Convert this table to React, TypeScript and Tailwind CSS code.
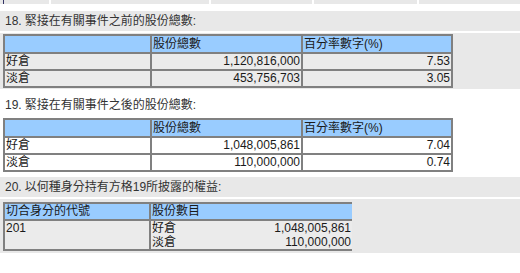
const font = { fontFamily: '"Liberation Sans", Arial, "Noto Sans CJK TC", sans-serif' };

function Title({ num, text, shade }: { num: string; text: string; shade: boolean }) {
  return (
    <div className={`h-[20px] flex items-center pl-[5px] text-[12px] text-[#333] ${shade ? "bg-[#e8e8e8]" : "bg-white"}`}>
      <span>{num}.</span>
      <span className="ml-[3px]">{text}</span>
    </div>
  );
}

function PositionTable({ rows, shade }: { rows: [string, string, string][]; shade: boolean }) {
  const cell = shade ? "bg-[#ebebeb]" : "bg-white";
  return (
    <div className="ml-[3px] w-[450px] p-[2px] bg-[#808080] grid grid-cols-[145px_149px_148px] gap-[2px] text-[12px] leading-[15px] text-[#1a1a1a]">
      <div className="bg-[#99ccff] h-[16px]" />
      <div className="bg-[#99ccff] h-[16px] pl-[1px] leading-[16px]">股份總數</div>
      <div className="bg-[#99ccff] h-[16px] pl-[1px] leading-[16px]">百分率數字(%)</div>
      {rows.map((r) => (
        <div key={r[0]} className="contents">
          <div className={`${cell} h-[15px] pl-[1px]`}>{r[0]}</div>
          <div className={`${cell} h-[15px] pr-[1px] text-right`}>{r[1]}</div>
          <div className={`${cell} h-[15px] pr-[1px] text-right`}>{r[2]}</div>
        </div>
      ))}
    </div>
  );
}

export default function App() {
  return (
    <div className="w-[520px] h-[273px] bg-white overflow-hidden flex flex-col" style={font}>
      <div className="h-[4px] flex gap-[2px] bg-white">
        <div className="w-[49px] bg-[#e8e8e8]">
          <div className="ml-[3px] w-[1px] h-full bg-[#333366]" />
        </div>
        <div className="w-[158px] bg-[#e8e8e8]" />
        <div className="w-[101px] bg-[#e8e8e8]" />
        <div className="w-[103px] bg-[#e8e8e8]" />
        <div className="flex-1 bg-[#e8e8e8]" />
      </div>

      <div className="mt-[7px]">
        <Title num="18" text="緊接在有關事件之前的股份總數:" shade />
        <div className="mt-[2px] bg-[#e8e8e8] pt-[1px] pb-[1px]">
          <PositionTable
            shade
            rows={[
              ["好倉", "1,120,816,000", "7.53"],
              ["淡倉", "453,756,703", "3.05"],
            ]}
          />
        </div>
      </div>

      <div className="mt-[6px]">
        <Title num="19" text="緊接在有關事件之後的股份總數:" shade={false} />
        <div className="mt-[2px] bg-white pt-[1px] pb-[1px]">
          <PositionTable
            shade={false}
            rows={[
              ["好倉", "1,048,005,861", "7.04"],
              ["淡倉", "110,000,000", "0.74"],
            ]}
          />
        </div>
      </div>

      <div className="mt-[4px]">
        <Title num="20" text="以何種身分持有方格19所披露的權益:" shade />
        <div className="mt-[2px] bg-[#e8e8e8] pt-[3px] pb-[2px]">
          <div className="ml-[3px] w-[349px] p-[2px] bg-[#808080] grid grid-cols-[144px_201px] gap-[2px] text-[12px] leading-[14px] text-[#1a1a1a]">
            <div className="bg-[#99ccff] h-[15px] pl-[1px] leading-[15px]">切合身分的代號</div>
            <div className="bg-[#99ccff] h-[15px] pl-[1px] leading-[15px]">股份數目</div>
            <div className="bg-[#ebebeb] h-[28px] pl-[1px]">201</div>
            <div className="bg-[#ebebeb] h-[28px] px-[1px] flex flex-col">
              <div className="flex justify-between">
                <span>好倉</span>
                <span>1,048,005,861</span>
              </div>
              <div className="flex justify-between">
                <span>淡倉</span>
                <span>110,000,000</span>
              </div>
            </div>
          </div>
        </div>
      </div>
    </div>
  );
}
